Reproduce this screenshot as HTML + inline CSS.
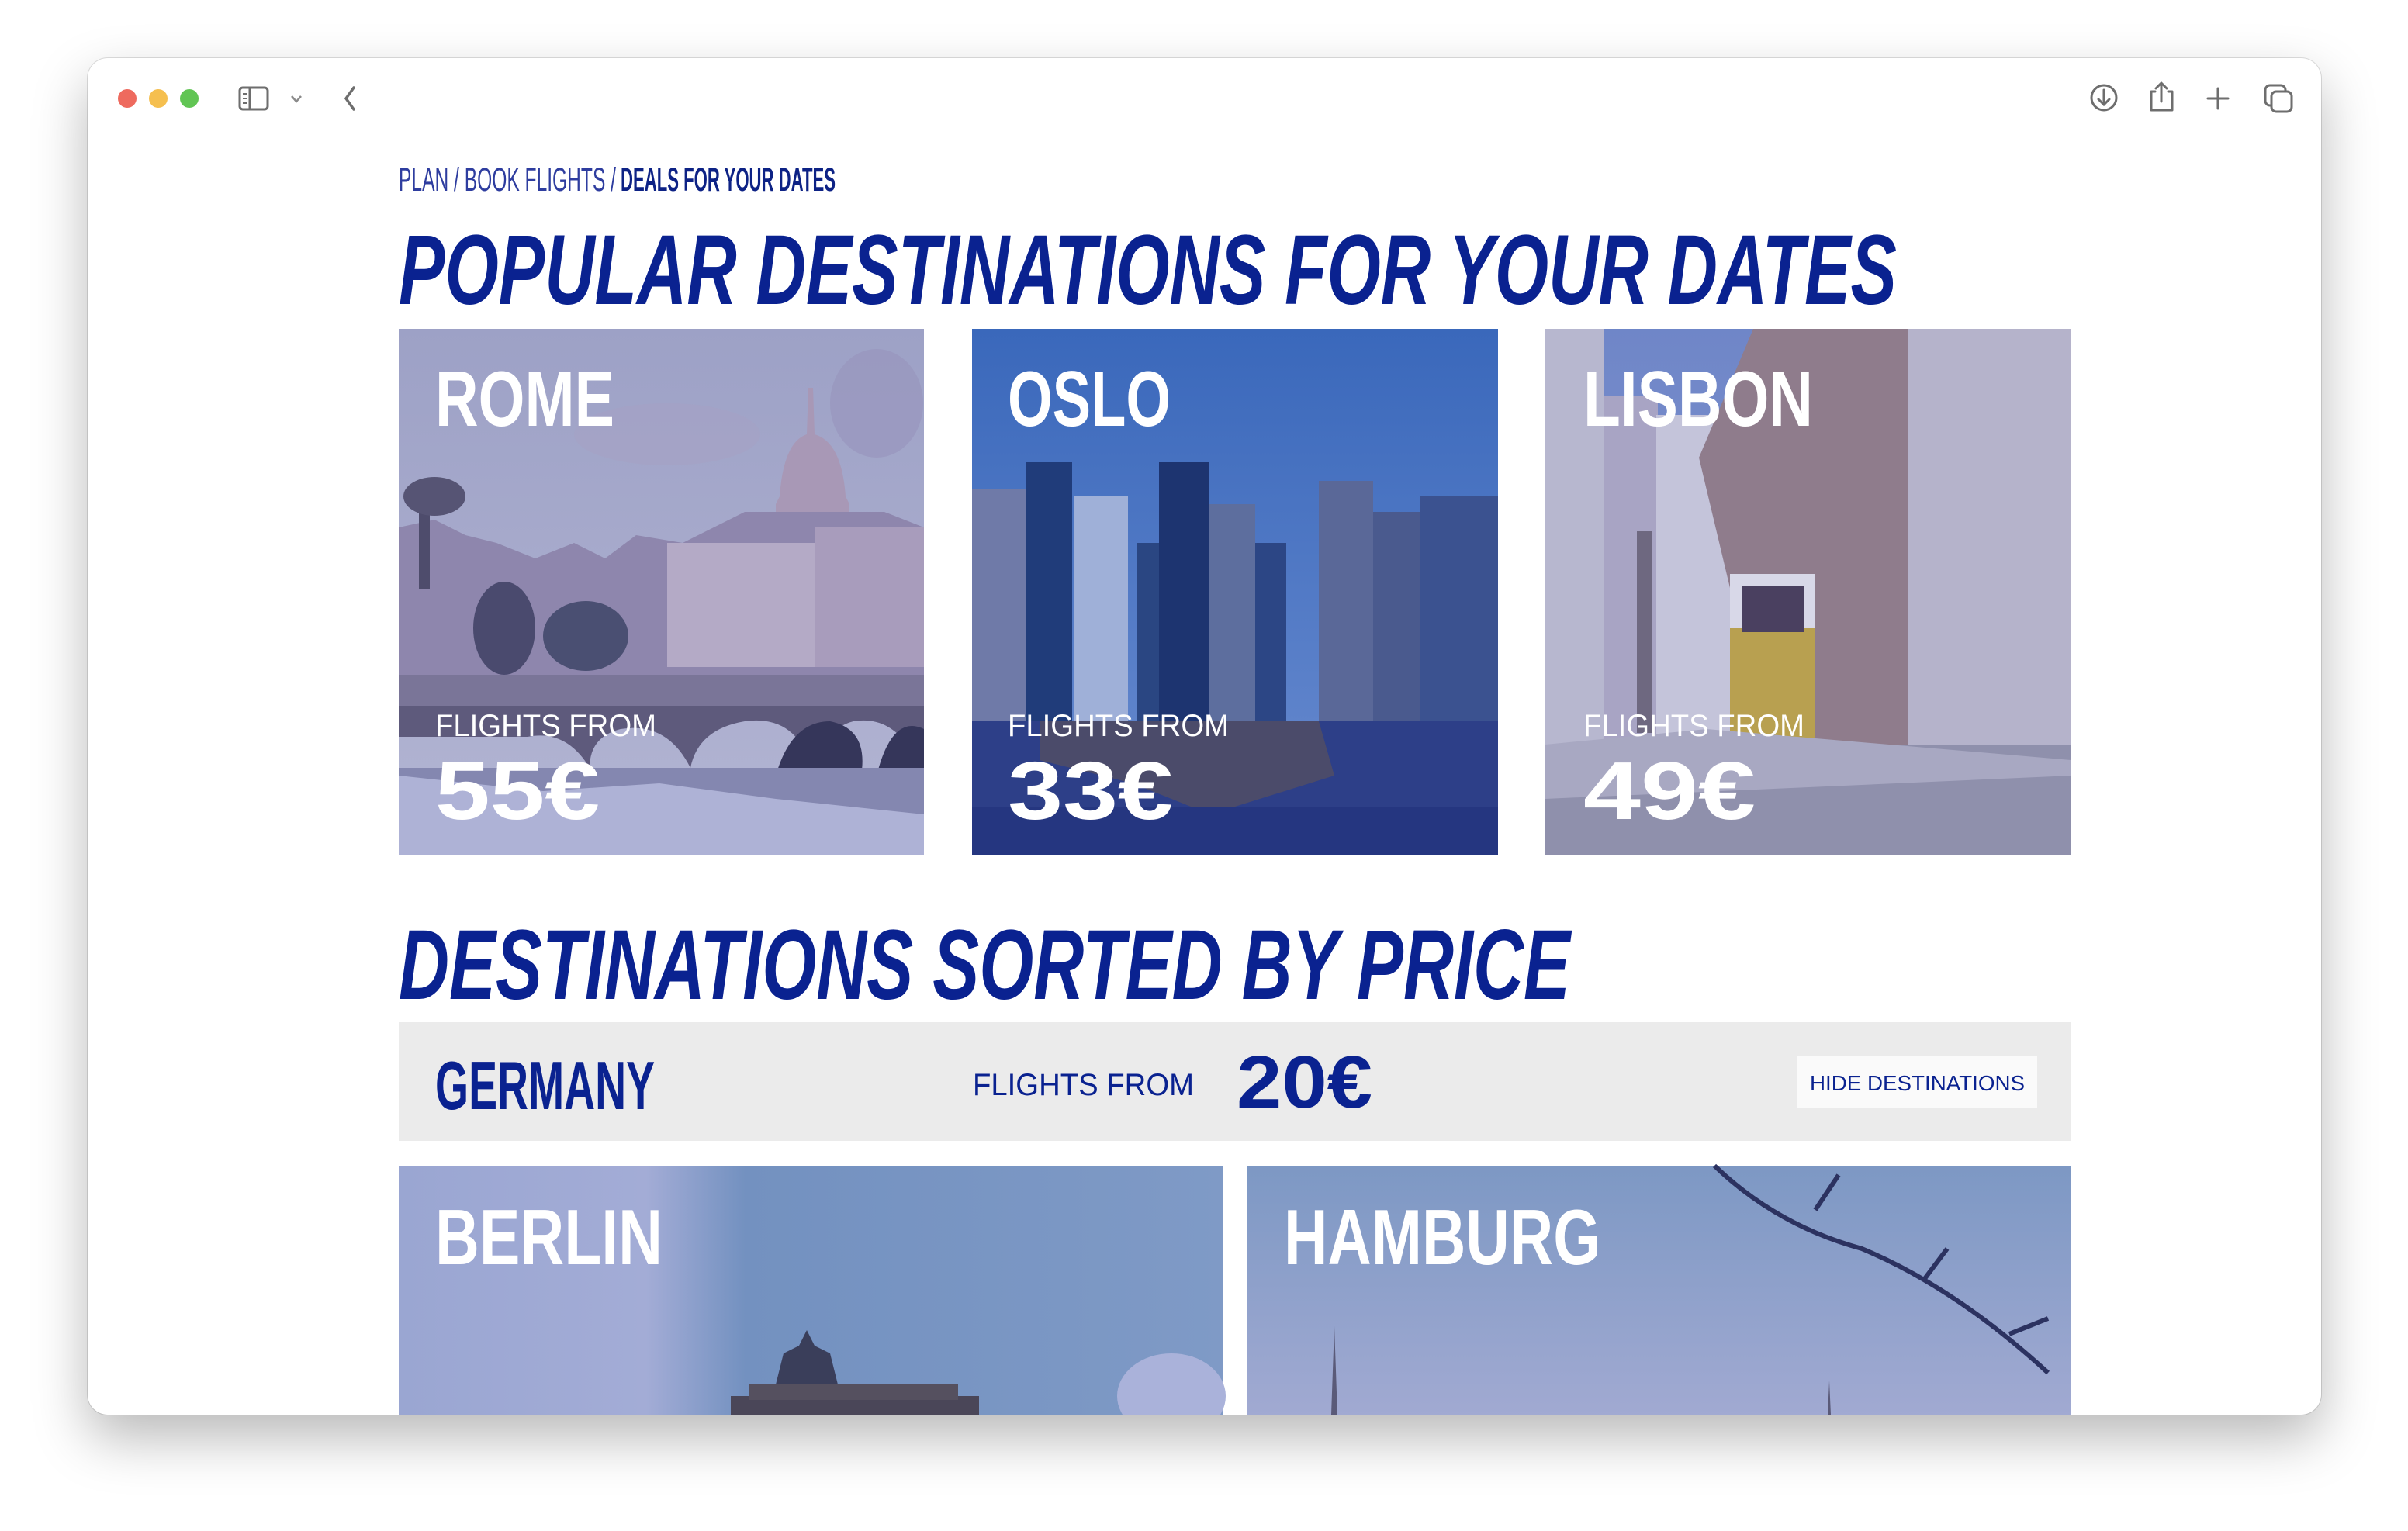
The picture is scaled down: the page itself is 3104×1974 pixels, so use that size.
<!DOCTYPE html>
<html><head><meta charset="utf-8"><style>
html,body{margin:0;padding:0;width:3104px;height:1974px;overflow:hidden;background:#ffffff;}
#win{position:absolute;left:113px;top:75px;width:2879px;height:1749px;border-radius:26px;background:#fff;box-shadow:0 30px 70px rgba(0,0,0,0.28),0 0 0 1px rgba(0,0,0,0.12);overflow:hidden;}
svg{position:absolute;left:0;top:0;}
</style></head><body>
<div id="win"></div>
<svg width="3104" height="1974" viewBox="0 0 3104 1974" xmlns="http://www.w3.org/2000/svg">
<defs>
<clipPath id="wc"><rect x="113" y="75" width="2879" height="1749" rx="26"/></clipPath>
<linearGradient id="romeSky" x1="0" y1="0" x2="0" y2="1"><stop offset="0" stop-color="#9da1c6"/><stop offset="1" stop-color="#b3b5d3"/></linearGradient>
<linearGradient id="osloSky" x1="0" y1="0" x2="0" y2="1"><stop offset="0" stop-color="#3a68bb"/><stop offset="1" stop-color="#6a8cd0"/></linearGradient>
<linearGradient id="lisSky" x1="0" y1="0" x2="0" y2="1"><stop offset="0" stop-color="#6f86c8"/><stop offset="1" stop-color="#8a9ad0"/></linearGradient>
<linearGradient id="berSky" x1="0" y1="0" x2="1" y2="0"><stop offset="0" stop-color="#9aa6d2"/><stop offset="0.3" stop-color="#a3acd6"/><stop offset="0.42" stop-color="#7391c0"/><stop offset="1" stop-color="#7f9ac6"/></linearGradient>
<linearGradient id="hamSky" x1="0" y1="0" x2="0" y2="1"><stop offset="0" stop-color="#7d98c4"/><stop offset="1" stop-color="#a2aad2"/></linearGradient>
</defs>
<g clip-path="url(#wc)">
<circle cx="164" cy="127" r="12" fill="#ee6a5e"/>
<circle cx="204" cy="127" r="12" fill="#f5bf4f"/>
<circle cx="244" cy="127" r="12" fill="#61c554"/>
<rect x="309" y="113" width="36" height="28" rx="4" fill="none" stroke="#6e6e6e" stroke-width="3"/>
<line x1="322" y1="113" x2="322" y2="141" stroke="#6e6e6e" stroke-width="3"/>
<line x1="313" y1="121" x2="318" y2="121" stroke="#6e6e6e" stroke-width="2"/>
<line x1="313" y1="127" x2="318" y2="127" stroke="#6e6e6e" stroke-width="2"/>
<line x1="313" y1="133" x2="318" y2="133" stroke="#6e6e6e" stroke-width="2"/>
<path d="M376 124 L382 131 L388 124" fill="none" stroke="#8a8a8a" stroke-width="2.5"/>
<path d="M456 113 L446 127 L456 141" fill="none" stroke="#6e6e6e" stroke-width="3.5" stroke-linecap="round"/>
<circle cx="2712" cy="126" r="16" fill="none" stroke="#6e6e6e" stroke-width="3"/>
<path d="M2712 116 V135 M2705 128 L2712 135 L2719 128" fill="none" stroke="#6e6e6e" stroke-width="3" stroke-linecap="round"/>
<path d="M2778 118 H2773 V142 H2800 V118 H2795 M2786 131 V108 M2779 114 L2786 107 L2793 114" fill="none" stroke="#6e6e6e" stroke-width="3" stroke-linecap="round" stroke-linejoin="round"/>
<path d="M2859 114 V140 M2846 127 H2872" stroke="#6e6e6e" stroke-width="3" stroke-linecap="round"/>
<rect x="2920" y="110" width="26" height="26" rx="6" fill="none" stroke="#6e6e6e" stroke-width="3"/>
<rect x="2928" y="118" width="26" height="26" rx="6" fill="#fff" stroke="#6e6e6e" stroke-width="3"/>

<text x="514" y="246" font-family="Liberation Sans Narrow, Liberation Sans, sans-serif" font-size="43" fill="#2e3d9f" textLength="280" lengthAdjust="spacingAndGlyphs">PLAN / BOOK FLIGHTS /</text>
<text x="800" y="246" font-family="Liberation Sans Narrow, Liberation Sans, sans-serif" font-size="43" font-weight="bold" fill="#0d2285" textLength="277" lengthAdjust="spacingAndGlyphs">DEALS FOR YOUR DATES</text>

<text x="514" y="392" font-family="Liberation Sans, sans-serif" font-size="128" font-weight="bold" font-style="italic" fill="#0a2290" textLength="1931" lengthAdjust="spacingAndGlyphs">POPULAR DESTINATIONS FOR YOUR DATES</text>

<!-- ROME -->
<rect x="514" y="424" width="677" height="678" fill="url(#romeSky)"/>
<ellipse cx="1130" cy="520" rx="60" ry="70" fill="#9896bd" opacity="0.7"/>
<ellipse cx="860" cy="560" rx="120" ry="40" fill="#a5a2c5" opacity="0.6"/>
<path d="M1042 500 L1048 500 L1050 560 Q1085 570 1090 640 L1095 650 L1095 680 L1000 680 L1000 650 L1005 640 Q1010 570 1040 560 Z" fill="#a898b6"/>
<path d="M514 680 L560 670 L600 690 L640 700 L690 720 L740 700 L780 720 L820 690 L880 700 L920 680 L960 660 L1140 660 L1191 680 L1191 870 L514 870 Z" fill="#8e86ad"/>
<rect x="860" y="700" width="190" height="160" fill="#b4aac6"/>
<rect x="1050" y="680" width="141" height="180" fill="#a89cbc"/>
<rect x="540" y="640" width="14" height="120" fill="#4e4c6c"/>
<ellipse cx="560" cy="640" rx="40" ry="25" fill="#565474"/>
<ellipse cx="650" cy="810" rx="40" ry="60" fill="#4a4a6e"/>
<ellipse cx="755" cy="820" rx="55" ry="45" fill="#4a4f72"/>
<rect x="514" y="870" width="677" height="40" fill="#7a7598"/>
<path d="M514 910 L1191 910 L1191 1000 Q1160 920 1100 930 Q1060 940 1050 1000 Q1030 920 960 930 Q900 940 890 990 Q860 930 800 940 Q760 950 760 990 Q730 940 680 950 L514 950 Z" fill="#5e5a7c"/>
<path d="M1000 1000 Q1020 930 1070 930 Q1120 940 1110 1000 Z M1130 1000 Q1150 920 1191 940 L1191 1000 Z" fill="#35365a"/>
<rect x="514" y="1000" width="677" height="102" fill="#aeb2d6"/>
<path d="M514 990 L1191 990 L1191 1050 L1000 1030 L850 1010 L700 1020 L514 1000 Z" fill="#8487b0"/>
<text x="561" y="549" font-family="Liberation Sans, sans-serif" font-size="101" font-weight="bold" fill="#fff" textLength="231" lengthAdjust="spacingAndGlyphs">ROME</text>
<text x="561" y="949" font-family="Liberation Sans, sans-serif" font-size="40" fill="#fff" textLength="285" lengthAdjust="spacingAndGlyphs">FLIGHTS FROM</text>
<text x="561" y="1056" font-family="Liberation Sans, sans-serif" font-size="106" font-weight="bold" fill="#fff" textLength="212" lengthAdjust="spacingAndGlyphs">55€</text>

<!-- OSLO -->
<rect x="1253" y="424" width="678" height="678" fill="url(#osloSky)"/>
<rect x="1253" y="630" width="70" height="320" fill="#6f7aa8"/>
<rect x="1322" y="596" width="60" height="340" fill="#203c7a"/>
<rect x="1384" y="640" width="70" height="300" fill="#9fb0d8"/>
<rect x="1465" y="700" width="30" height="240" fill="#2a4682"/>
<rect x="1494" y="596" width="64" height="340" fill="#1d3470"/>
<rect x="1558" y="650" width="60" height="290" fill="#5d6e9e"/>
<rect x="1618" y="700" width="40" height="240" fill="#2c4685"/>
<rect x="1700" y="620" width="70" height="320" fill="#5a6898"/>
<rect x="1770" y="660" width="60" height="280" fill="#4a5a8e"/>
<rect x="1830" y="640" width="101" height="300" fill="#3b5290"/>
<rect x="1253" y="930" width="678" height="172" fill="#2d3f88"/>
<path d="M1340 930 L1700 930 L1720 1000 L1560 1050 L1460 1010 L1340 980 Z" fill="#4b4b6a"/>
<rect x="1253" y="1040" width="678" height="62" fill="#253680"/>
<text x="1299" y="549" font-family="Liberation Sans, sans-serif" font-size="101" font-weight="bold" fill="#fff" textLength="210" lengthAdjust="spacingAndGlyphs">OSLO</text>
<text x="1299" y="949" font-family="Liberation Sans, sans-serif" font-size="40" fill="#fff" textLength="285" lengthAdjust="spacingAndGlyphs">FLIGHTS FROM</text>
<text x="1299" y="1056" font-family="Liberation Sans, sans-serif" font-size="106" font-weight="bold" fill="#fff" textLength="213" lengthAdjust="spacingAndGlyphs">33€</text>

<!-- LISBON -->
<rect x="1992" y="424" width="678" height="678" fill="url(#lisSky)"/>
<rect x="1992" y="424" width="75" height="620" fill="#b7b7cf"/>
<rect x="2067" y="510" width="70" height="530" fill="#a8a4c4"/>
<rect x="2135" y="535" width="120" height="470" fill="#c4c4da"/>
<path d="M2190 590 L2260 424 L2670 424 L2670 1010 L2290 1010 Z" fill="#8f7c8c"/>
<rect x="2460" y="424" width="210" height="580" fill="#b5b3cb"/>
<rect x="2110" y="685" width="20" height="260" fill="#6e6880"/>
<rect x="2230" y="740" width="110" height="80" fill="#d8d8e8"/>
<rect x="2230" y="810" width="110" height="160" fill="#b8a050"/>
<rect x="2245" y="755" width="80" height="60" fill="#4a4060"/>
<rect x="1992" y="960" width="678" height="142" fill="#8f90ac"/>
<path d="M1992 960 L2200 940 L2670 980 L2670 1000 L1992 1030 Z" fill="#a8a8c2"/>
<text x="2041" y="549" font-family="Liberation Sans, sans-serif" font-size="101" font-weight="bold" fill="#fff" textLength="296" lengthAdjust="spacingAndGlyphs">LISBON</text>
<text x="2041" y="949" font-family="Liberation Sans, sans-serif" font-size="40" fill="#fff" textLength="285" lengthAdjust="spacingAndGlyphs">FLIGHTS FROM</text>
<text x="2041" y="1056" font-family="Liberation Sans, sans-serif" font-size="106" font-weight="bold" fill="#fff" textLength="222" lengthAdjust="spacingAndGlyphs">49€</text>

<text x="514" y="1288" font-family="Liberation Sans, sans-serif" font-size="128" font-weight="bold" font-style="italic" fill="#0a2290" textLength="1510" lengthAdjust="spacingAndGlyphs">DESTINATIONS SORTED BY PRICE</text>

<rect x="514" y="1318" width="2156" height="153" fill="#ebebeb"/>
<text x="561" y="1430" font-family="Liberation Sans, sans-serif" font-size="88" font-weight="bold" fill="#0a2290" textLength="283" lengthAdjust="spacingAndGlyphs">GERMANY</text>
<text x="1254" y="1412" font-family="Liberation Sans, sans-serif" font-size="40" fill="#0a2290" textLength="285" lengthAdjust="spacingAndGlyphs">FLIGHTS FROM</text>
<text x="1594" y="1428" font-family="Liberation Sans, sans-serif" font-size="96" font-weight="bold" fill="#0a2290" textLength="175" lengthAdjust="spacingAndGlyphs">20€</text>
<rect x="2317" y="1362" width="309" height="66" fill="#fafafa"/>
<text x="2333" y="1406" font-family="Liberation Sans, sans-serif" font-size="28" fill="#0a2290" textLength="277" lengthAdjust="spacingAndGlyphs">HIDE DESTINATIONS</text>

<!-- Berlin -->
<rect x="514" y="1503" width="1063" height="330" fill="url(#berSky)"/>
<ellipse cx="1510" cy="1800" rx="70" ry="55" fill="#aab2da"/>
<rect x="942" y="1800" width="320" height="30" fill="#4a4658"/>
<rect x="965" y="1785" width="270" height="20" fill="#55505f"/>
<path d="M1000 1785 L1010 1745 L1030 1735 L1040 1715 L1050 1735 L1070 1745 L1080 1785 Z" fill="#3a3e5a"/>
<text x="561" y="1630" font-family="Liberation Sans, sans-serif" font-size="101" font-weight="bold" fill="#fff" textLength="293" lengthAdjust="spacingAndGlyphs">BERLIN</text>

<!-- Hamburg -->
<rect x="1608" y="1503" width="1062" height="330" fill="url(#hamSky)"/>
<path d="M2210 1503 Q2290 1580 2400 1610 Q2520 1660 2640 1770 M2340 1560 L2370 1515 M2480 1650 L2510 1610 M2590 1720 L2640 1700" fill="none" stroke="#2c3260" stroke-width="6"/>
<path d="M1716 1824 L1720 1710 L1724 1824 Z" fill="#5a5a78"/>
<path d="M2356 1824 L2358 1780 L2360 1824 Z" fill="#5a5a78"/>
<text x="1655" y="1630" font-family="Liberation Sans, sans-serif" font-size="101" font-weight="bold" fill="#fff" textLength="408" lengthAdjust="spacingAndGlyphs">HAMBURG</text>
</g>
</svg>
</body></html>
